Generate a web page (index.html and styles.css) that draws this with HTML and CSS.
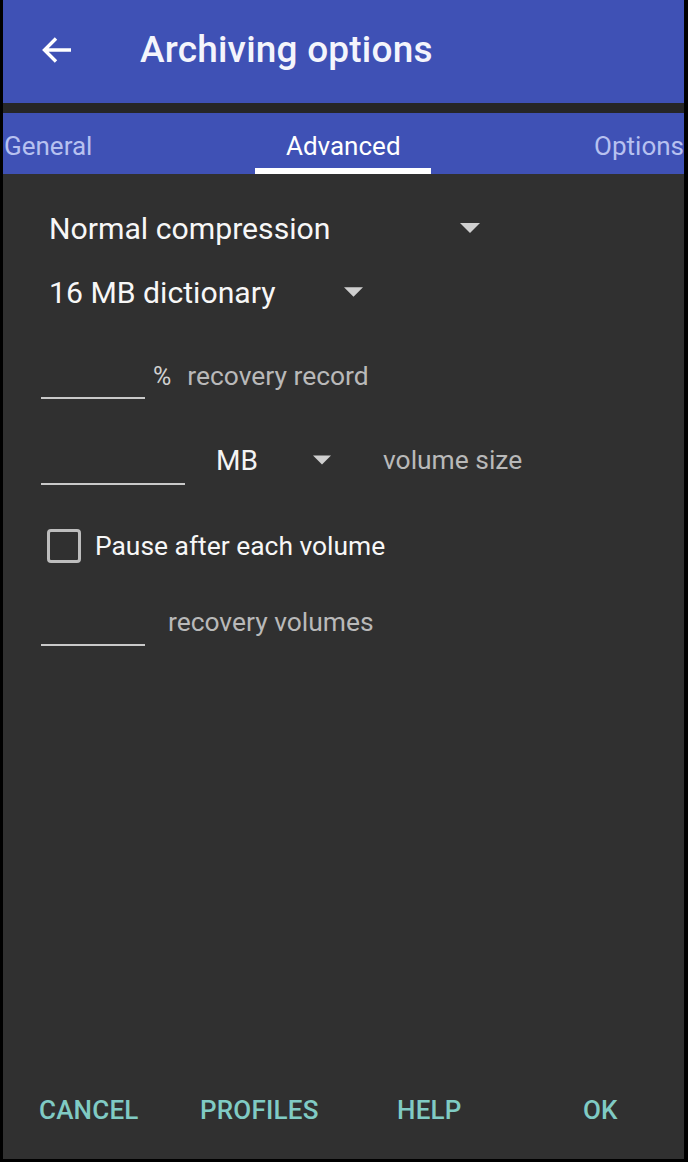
FILE: index.html
```html
<!DOCTYPE html>
<html lang="en">
<head>
<meta charset="utf-8">
<title>Archiving options</title>
<link rel="stylesheet" href="styles.css">
</head>
<body>
<div class="screen">
  <header class="appbar">
    <svg class="back" width="34" height="30" viewBox="0 0 34 30" aria-hidden="true">
      <path d="M31 15H5M16 3.5L4.5 15L16 26.5" fill="none" stroke="#ffffff" stroke-width="3.4" stroke-linecap="butt" stroke-linejoin="miter"/>
    </svg>
    <h1 class="title">Archiving options</h1>
  </header>
  <div class="band"></div>
  <nav class="tabs">
    <span class="tab">General</span>
    <span class="tab active">Advanced</span>
    <span class="tab">Options</span>
  </nav>
  <main class="content">
    <div class="row spinner row-1">
      <span class="spin-label w-comp">Normal compression</span>
      <svg class="caret" width="20" height="10" viewBox="0 0 20 10"><polygon points="0,0 20,0 10,10" fill="#cfcfcf"/></svg>
    </div>
    <div class="row spinner row-2">
      <span class="spin-label w-dict">16 MB dictionary</span>
      <svg class="caret" width="19" height="10" viewBox="0 0 20 10"><polygon points="0,0 20,0 10,10" fill="#cfcfcf"/></svg>
    </div>
    <div class="row field-row row-3">
      <span class="field f-small fb-3"></span>
      <span class="unit pct">%</span>
      <span class="hint">recovery record</span>
    </div>
    <div class="row field-row row-4">
      <span class="field f-wide fb-1"></span>
      <span class="unit mb">MB</span>
      <svg class="caret" width="18" height="10" viewBox="0 0 20 10"><polygon points="0,0 20,0 10,10" fill="#cfcfcf"/></svg>
      <span class="hint vol">volume size</span>
    </div>
    <div class="row check-row row-5">
      <span class="checkbox"></span>
      <span class="check-label">Pause after each volume</span>
    </div>
    <div class="row field-row row-6">
      <span class="field f-small fb-2"></span>
      <span class="hint recv">recovery volumes</span>
    </div>
  </main>
  <footer class="buttons">
    <span class="btn b-cancel">CANCEL</span>
    <span class="btn b-profiles">PROFILES</span>
    <span class="btn b-help">HELP</span>
    <span class="btn b-ok">OK</span>
  </footer>
</div>
</body>
</html>
```
FILE: styles.css
```css
* { box-sizing: border-box; }
html, body {
  margin: 0;
  padding: 0;
  background: #000;
}
body {
  width: 688px;
  height: 1162px;
  overflow: hidden;
  font-family: Roboto, "Noto Sans", "Liberation Sans", sans-serif;
}
.screen {
  margin-left: 3px;
  width: 681px;
  height: 1159px;
  background: #303030;
  display: flex;
  flex-direction: column;
}
.appbar {
  height: 103px;
  background: #3f51b5;
  display: flex;
  align-items: center;
  padding-left: 37px;
  padding-bottom: 4px;
}
.back { display: block; }
.title {
  margin: 0 0 0 66px;
  font-size: 37px;
  font-weight: 500;
  color: #f4f5fc;
  letter-spacing: 0.2px;
}
.band {
  height: 10px;
  background: #262626;
}
.tabs {
  height: 61px;
  background: #3f51b5;
  display: flex;
  justify-content: space-between;
  align-items: stretch;
  padding: 0 0 0 1px;
}
.tab {
  display: flex;
  align-items: center;
  font-size: 26px;
  color: #b7c1f0;
  padding-top: 4px;
}
.tab.active {
  width: 176px;
  justify-content: center;
  color: #ffffff;
  border-bottom: 6px solid #ffffff;
  padding-top: 10px;
}
.content {
  padding: 22px 0 0 38px;
  display: flex;
  flex-direction: column;
  color: #ffffff;
}
.row {
  display: flex;
  align-items: center;
}
.spinner {
  height: 64px;
  padding-left: 8px;
  font-size: 30.2px;
  color: #f7f7f7;
}
.spin-label { display: block; }
.w-comp { width: 411px; }
.w-dict { width: 295px; }
.caret { display: block; }
.field-row { height: 52px; }
.row-3 { margin-top: 26px; }
.row-4 { margin-top: 32px; }
.row-5 { margin-top: 34px; }
.row-6 { margin-top: 24px; }
.field {
  align-self: stretch;
  border-bottom: 2px solid #c9c9c9;
}
.f-small { width: 104px; }
.f-wide { width: 144px; }
.fb-1 { margin-bottom: 1px; }
.fb-2 { margin-bottom: 2px; }
.fb-3 { margin-bottom: 3px; }
.unit {
  font-size: 25px;
  color: #d0d0d0;
}
.pct { margin-left: 8px; }
.mb {
  margin-left: 31px;
  width: 97px;
  font-size: 28px;
  color: #f4f4f4;
}
.hint {
  font-size: 26.4px;
  color: #b9b9b9;
  margin-left: 16px;
}
.hint.vol { margin-left: 52px; }
.hint.recv { margin-left: 23px; }
.check-row {
  height: 52px;
  padding-left: 6px;
}
.checkbox {
  width: 34px;
  height: 34px;
  border: 3px solid #bdbdbd;
  border-radius: 4px;
}
.check-label {
  margin-left: 14px;
  font-size: 26.4px;
  color: #f7f7f7;
}
.buttons {
  margin-top: auto;
  height: 96px;
  margin-bottom: 1px;
  padding-left: 36px;
  display: grid;
  grid-template-columns: 161px 197px 186px auto;
  align-items: center;
}
.btn {
  font-size: 26px;
  font-weight: 500;
  color: #80cbc4;
  letter-spacing: 0.2px;
}
```
